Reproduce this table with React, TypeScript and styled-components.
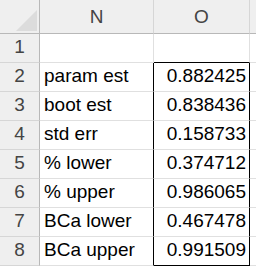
import React from 'react';
import styled, { createGlobalStyle } from 'styled-components';

const GlobalStyle = createGlobalStyle`
  html, body {
    margin: 0;
    padding: 0;
    background: #ffffff;
  }
`;

interface EdgeProps {
  $right?: boolean;
  $bottom?: boolean;
}

const Sheet = styled.div`
  display: grid;
  grid-template-columns: 40px 114px 96px 1fr;
  grid-template-rows: 34px repeat(8, 29px);
  width: 256px;
  height: 268px;
  overflow: hidden;
  font-family: 'Liberation Sans', Arial, sans-serif;
  font-size: 19px;
`;

const Corner = styled.div`
  background: #efefef;
  border-right: 1px solid #b8b8b8;
  border-bottom: 1px solid #b8b8b8;
  display: flex;
  align-items: flex-end;
  justify-content: flex-end;
  padding: 0 2px 2px 0;
  box-sizing: border-box;
`;

const ColHead = styled.div`
  background: #efefef;
  border-right: 1px solid #d6d6d6;
  border-bottom: 1px solid #b8b8b8;
  color: #444444;
  display: flex;
  align-items: center;
  justify-content: center;
  padding-top: 1px;
  box-sizing: border-box;
`;

const RowHead = styled.div`
  background: #efefef;
  border-right: 1px solid #b8b8b8;
  border-bottom: 1px solid #d6d6d6;
  color: #444444;
  display: flex;
  align-items: flex-end;
  justify-content: center;
  padding-bottom: 4px;
  box-sizing: border-box;
`;

const Cell = styled.div<EdgeProps & { $num?: boolean }>`
  border-right: 1px solid ${(p) => (p.$right ? '#000000' : '#e0e0e0')};
  border-bottom: 1px solid ${(p) => (p.$bottom ? '#000000' : '#e0e0e0')};
  color: #000000;
  display: flex;
  align-items: flex-end;
  justify-content: ${(p) => (p.$num ? 'flex-end' : 'flex-start')};
  padding: 0 3px 4px 4px;
  box-sizing: border-box;
  white-space: nowrap;
  overflow: hidden;
`;

const rows: [string, string][] = [
  ['param est', '0.882425'],
  ['boot est', '0.838436'],
  ['std err', '0.158733'],
  ['% lower', '0.374712'],
  ['% upper', '0.986065'],
  ['BCa lower', '0.467478'],
  ['BCa upper', '0.991509'],
];

const App: React.FC = () => (
  <>
    <GlobalStyle />
    <Sheet>
      <Corner>
        <svg width="21" height="21" viewBox="0 0 21 21">
          <polygon points="21,0 21,21 0,21" fill="#dcdcdc" />
        </svg>
      </Corner>
      <ColHead>N</ColHead>
      <ColHead>O</ColHead>
      <ColHead />

      <RowHead>1</RowHead>
      <Cell />
      <Cell $bottom />
      <Cell />

      {rows.map(([label, value], i) => (
        <React.Fragment key={label}>
          <RowHead>{i + 2}</RowHead>
          <Cell $right>{label}</Cell>
          <Cell $num $right $bottom={i === rows.length - 1}>
            {value}
          </Cell>
          <Cell />
        </React.Fragment>
      ))}
    </Sheet>
  </>
);

export default App;
